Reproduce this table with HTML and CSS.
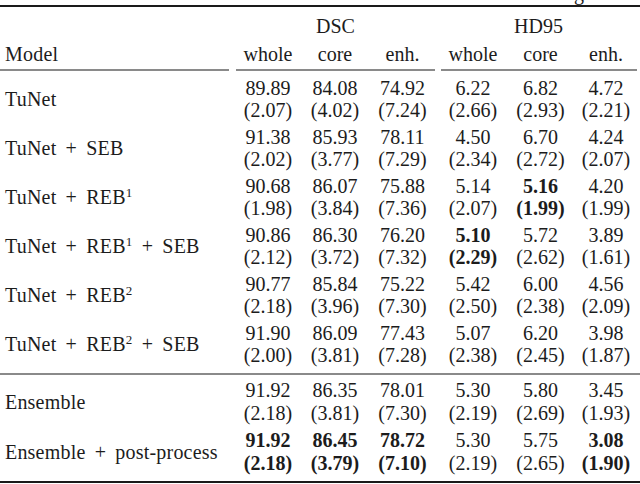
FILE: index.html
```html
<!DOCTYPE html>
<html lang="en">
<head>
<meta charset="utf-8">
<title>Results table</title>
<link rel="stylesheet" href="styles.css">
</head>
<body>
<div class="caption"><div class="caption-text">g</div></div>
<table class="results">
  <colgroup>
    <col class="c-model"><col class="c-1"><col class="c-2"><col class="c-3"><col class="c-4"><col class="c-5"><col class="c-6">
  </colgroup>
  <thead>
    <tr class="h1">
      <th></th>
      <th colspan="3">DSC</th>
      <th colspan="3">HD95</th>
    </tr>
    <tr class="h2">
      <th class="label">Model</th>
      <th>whole</th><th>core</th><th>enh.</th>
      <th>whole</th><th>core</th><th>enh.</th>
    </tr>
    <tr class="cmid">
      <td><div class="line l-model"></div></td>
      <td colspan="3"><div class="line l-dsc"></div></td>
      <td colspan="3"><div class="line l-hd"></div></td>
    </tr>
  </thead>
  <tbody class="main">
    <tr>
      <td class="label">TuNet</td>
      <td>89.89<br>(2.07)</td><td>84.08<br>(4.02)</td><td>74.92<br>(7.24)</td>
      <td>6.22<br>(2.66)</td><td>6.82<br>(2.93)</td><td>4.72<br>(2.21)</td>
    </tr>
    <tr>
      <td class="label">TuNet <span class="op">+</span> SEB</td>
      <td>91.38<br>(2.02)</td><td>85.93<br>(3.77)</td><td>78.11<br>(7.29)</td>
      <td>4.50<br>(2.34)</td><td>6.70<br>(2.72)</td><td>4.24<br>(2.07)</td>
    </tr>
    <tr>
      <td class="label">TuNet <span class="op">+</span> REB<sup>1</sup></td>
      <td>90.68<br>(1.98)</td><td>86.07<br>(3.84)</td><td>75.88<br>(7.36)</td>
      <td>5.14<br>(2.07)</td><td class="best">5.16<br>(1.99)</td><td>4.20<br>(1.99)</td>
    </tr>
    <tr>
      <td class="label">TuNet <span class="op">+</span> REB<sup>1</sup> <span class="op">+</span> SEB</td>
      <td>90.86<br>(2.12)</td><td>86.30<br>(3.72)</td><td>76.20<br>(7.32)</td>
      <td class="best">5.10<br>(2.29)</td><td>5.72<br>(2.62)</td><td>3.89<br>(1.61)</td>
    </tr>
    <tr>
      <td class="label">TuNet <span class="op">+</span> REB<sup>2</sup></td>
      <td>90.77<br>(2.18)</td><td>85.84<br>(3.96)</td><td>75.22<br>(7.30)</td>
      <td>5.42<br>(2.50)</td><td>6.00<br>(2.38)</td><td>4.56<br>(2.09)</td>
    </tr>
    <tr>
      <td class="label">TuNet <span class="op">+</span> REB<sup>2</sup> <span class="op">+</span> SEB</td>
      <td>91.90<br>(2.00)</td><td>86.09<br>(3.81)</td><td>77.43<br>(7.28)</td>
      <td>5.07<br>(2.38)</td><td>6.20<br>(2.45)</td><td>3.98<br>(1.87)</td>
    </tr>
  </tbody>
  <tbody class="ens">
    <tr>
      <td class="label">Ensemble</td>
      <td>91.92<br>(2.18)</td><td>86.35<br>(3.81)</td><td>78.01<br>(7.30)</td>
      <td>5.30<br>(2.19)</td><td>5.80<br>(2.69)</td><td>3.45<br>(1.93)</td>
    </tr>
    <tr>
      <td class="label">Ensemble <span class="op">+</span> post-process</td>
      <td class="best">91.92<br>(2.18)</td><td class="best">86.45<br>(3.79)</td><td class="best">78.72<br>(7.10)</td>
      <td>5.30<br>(2.19)</td><td>5.75<br>(2.65)</td><td class="best">3.08<br>(1.90)</td>
    </tr>
  </tbody>
</table>
</body>
</html>
```
FILE: styles.css
```css
html, body {
  margin: 0;
  padding: 0;
  background: #ffffff;
}

body {
  width: 640px;
  height: 484px;
  overflow: hidden;
  font-family: "Liberation Serif", "Times New Roman", serif;
  font-size: 20px;
  color: #1c1c1c;
}

.caption {
  height: 5px;
  overflow: hidden;
}

.caption-text {
  margin-top: -18.5px;
  line-height: 22.5px;
  text-align: right;
  padding-right: 56px;
}

.results {
  width: 640px;
  table-layout: fixed;
  border-collapse: collapse;
  border-spacing: 0;
  border-top: 2px solid #1a1a1a;
  border-bottom: 2px solid #1a1a1a;
  line-height: 22.5px;
}

.c-model { width: 234px; }
.c-1 { width: 68px; }
.c-2 { width: 66px; }
.c-3 { width: 69px; }
.c-4 { width: 72px; }
.c-5 { width: 63px; }
.c-6 { width: 68px; }

.results th,
.results td {
  padding: 0;
  font-weight: normal;
  text-align: center;
  vertical-align: middle;
  white-space: nowrap;
}

.results .label {
  text-align: left;
  padding-left: 5px;
  letter-spacing: 0.2px;
}

.op {
  margin: 0 4px;
}

.h1 th {
  padding-top: 8px;
}

.h2 th {
  padding-top: 5px;
  padding-bottom: 4px;
}

.cmid td {
  padding: 0;
  line-height: 0;
}

.line {
  height: 2px;
  background: #8a8a8a;
}

.l-model { margin-right: 5px; }
.l-dsc { margin-left: 2px; margin-right: 2px; }
.l-hd { margin-left: 4px; margin-right: 3px; }

.main td {
  padding-top: 2.05px;
  padding-bottom: 2.05px;
}

.main tr:first-child td {
  padding-top: 5.5px;
}

.main tr:last-child td {
  padding-bottom: 6.5px;
}

.ens {
  border-top: 2px solid #8a8a8a;
}

.ens td {
  padding-top: 2.5px;
  padding-bottom: 2.5px;
}

.ens tr:first-child td {
  padding-top: 4px;
}

.ens tr:last-child td {
  padding-bottom: 7px;
}

.results .best {
  font-weight: bold;
}

sup {
  font-size: 13px;
  line-height: 0;
  vertical-align: 7px;
}
```
